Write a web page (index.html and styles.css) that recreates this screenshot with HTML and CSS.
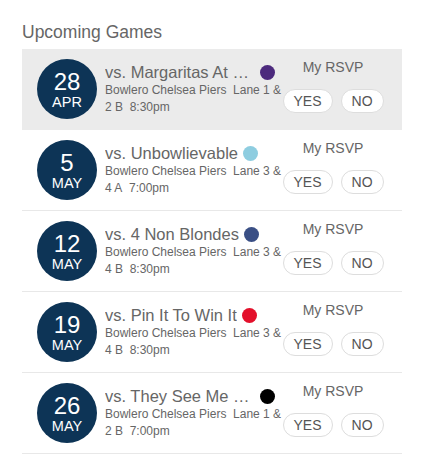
FILE: index.html
```html
<!DOCTYPE html>
<html lang="en">
<head>
<meta charset="utf-8">
<title>Upcoming Games</title>
<link rel="stylesheet" href="styles.css">
</head>
<body>
<section class="games">
  <h2 class="games__heading">Upcoming Games</h2>
  <ul class="games__list">
    <li class="game game--next">
      <div class="date"><span class="date__day">28</span><span class="date__month">APR</span></div>
      <div class="info">
        <div class="info__top"><span class="info__title">vs. Margaritas At Midnight</span><span class="dot dot--purple"></span></div>
        <div class="info__meta">Bowlero Chelsea Piers&nbsp; Lane 1 &amp; 2 B&nbsp; 8:30pm</div>
      </div>
      <div class="rsvp">
        <div class="rsvp__label">My RSVP</div>
        <div class="rsvp__buttons"><button class="rsvp__btn">YES</button><button class="rsvp__btn">NO</button></div>
      </div>
    </li>
    <li class="game">
      <div class="date"><span class="date__day">5</span><span class="date__month">MAY</span></div>
      <div class="info">
        <div class="info__top"><span class="info__title">vs. Unbowlievable</span><span class="dot dot--sky"></span></div>
        <div class="info__meta">Bowlero Chelsea Piers&nbsp; Lane 3 &amp; 4 A&nbsp; 7:00pm</div>
      </div>
      <div class="rsvp">
        <div class="rsvp__label">My RSVP</div>
        <div class="rsvp__buttons"><button class="rsvp__btn">YES</button><button class="rsvp__btn">NO</button></div>
      </div>
    </li>
    <li class="game">
      <div class="date"><span class="date__day">12</span><span class="date__month">MAY</span></div>
      <div class="info">
        <div class="info__top"><span class="info__title">vs. 4 Non Blondes</span><span class="dot dot--navy"></span></div>
        <div class="info__meta">Bowlero Chelsea Piers&nbsp; Lane 3 &amp; 4 B&nbsp; 8:30pm</div>
      </div>
      <div class="rsvp">
        <div class="rsvp__label">My RSVP</div>
        <div class="rsvp__buttons"><button class="rsvp__btn">YES</button><button class="rsvp__btn">NO</button></div>
      </div>
    </li>
    <li class="game">
      <div class="date"><span class="date__day">19</span><span class="date__month">MAY</span></div>
      <div class="info">
        <div class="info__top"><span class="info__title">vs. Pin It To Win It</span><span class="dot dot--red"></span></div>
        <div class="info__meta">Bowlero Chelsea Piers&nbsp; Lane 3 &amp; 4 B&nbsp; 8:30pm</div>
      </div>
      <div class="rsvp">
        <div class="rsvp__label">My RSVP</div>
        <div class="rsvp__buttons"><button class="rsvp__btn">YES</button><button class="rsvp__btn">NO</button></div>
      </div>
    </li>
    <li class="game">
      <div class="date"><span class="date__day">26</span><span class="date__month">MAY</span></div>
      <div class="info">
        <div class="info__top"><span class="info__title">vs. They See Me Rollin'</span><span class="dot dot--black"></span></div>
        <div class="info__meta">Bowlero Chelsea Piers&nbsp; Lane 1 &amp; 2 B&nbsp; 7:00pm</div>
      </div>
      <div class="rsvp">
        <div class="rsvp__label">My RSVP</div>
        <div class="rsvp__buttons"><button class="rsvp__btn">YES</button><button class="rsvp__btn">NO</button></div>
      </div>
    </li>
  </ul>
</section>
</body>
</html>
```
FILE: styles.css
```css
* { box-sizing: border-box; }

body {
  margin: 0;
  background: #fff;
  font-family: "Liberation Sans", Arial, sans-serif;
  color: #666;
}

.games {
  width: 402px;
  padding: 22px 0 0 22px;
}

.games__heading {
  margin: 0 0 7px;
  font-size: 17.5px;
  font-weight: normal;
  line-height: 20px;
  color: #666;
}

.games__list {
  list-style: none;
  margin: 0;
  padding: 0;
}

.game {
  display: flex;
  align-items: center;
  height: 81px;
  padding-left: 15px;
  border-bottom: 1px solid #e8e8e8;
}

.game--next {
  background: #ebebeb;
  border-bottom-color: #ebebeb;
}

.date {
  flex: none;
  width: 60px;
  height: 60px;
  border-radius: 50%;
  background: #0d3456;
  color: #fff;
  display: flex;
  flex-direction: column;
  align-items: center;
  justify-content: center;
}

.date__day {
  font-size: 24px;
  line-height: 24px;
}

.date__month {
  font-size: 14.5px;
  line-height: 14px;
  margin-top: 1px;
}

.info {
  flex: none;
  width: 180px;
  margin-left: 8px;
}

.info__top {
  display: flex;
  align-items: center;
  height: 20px;
}

.info__title {
  max-width: 150px;
  white-space: nowrap;
  overflow: hidden;
  text-overflow: ellipsis;
  font-size: 16.5px;
  line-height: 20px;
  color: #666;
}

.dot {
  flex: none;
  width: 15px;
  height: 15px;
  border-radius: 50%;
  margin-left: 5px;
}

.dot--purple { background: #4c2a7d; }
.dot--sky { background: #8ecde0; }
.dot--navy { background: #3a4f85; }
.dot--red { background: #e3102b; }
.dot--black { background: #000; }

.info__meta {
  font-size: 12px;
  line-height: 17px;
  color: #666;
}

.rsvp {
  flex: none;
  width: 96px;
  align-self: flex-start;
  margin-top: 10px;
  display: flex;
  flex-direction: column;
  align-items: center;
}

.rsvp__label {
  font-size: 14px;
  line-height: 17px;
  color: #666;
  white-space: nowrap;
}

.rsvp__buttons {
  display: flex;
  gap: 8px;
  margin-top: 13px;
}

.rsvp__btn {
  height: 24px;
  padding: 0 10px;
  border: 1px solid #ddd;
  border-radius: 12px;
  background: #fff;
  font-family: "Liberation Sans", Arial, sans-serif;
  font-size: 14px;
  line-height: 22px;
  color: #555;
  cursor: pointer;
}
```
